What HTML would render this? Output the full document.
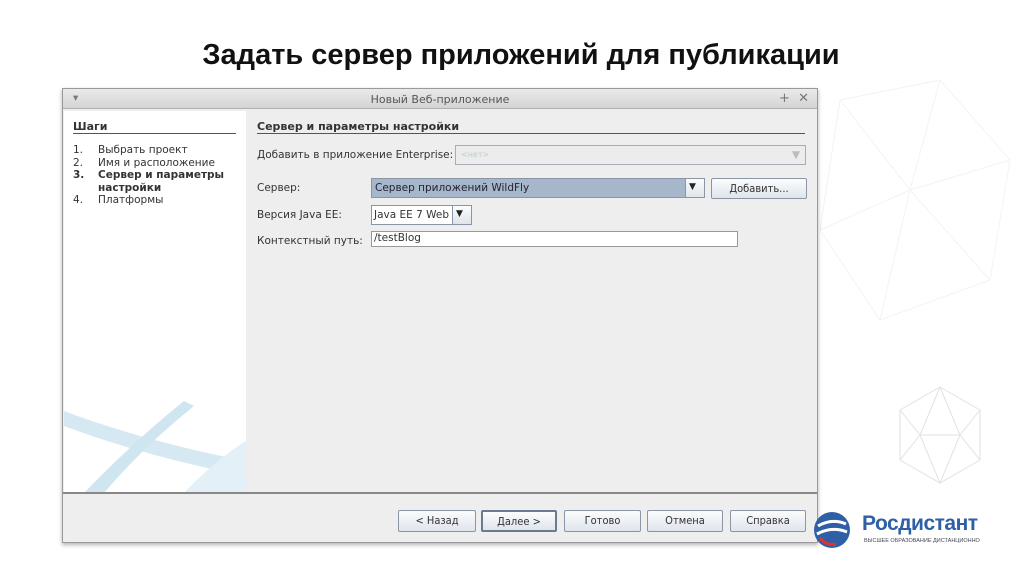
<!DOCTYPE html>
<html><head><meta charset="utf-8"><style>
*{margin:0;padding:0;box-sizing:border-box}
body{width:1024px;height:574px;background:#fff;position:relative;overflow:hidden;font-family:"Liberation Sans","DejaVu Sans",sans-serif}
.a{position:absolute}
h1{position:absolute;left:0;width:1042px;top:39px;text-align:center;font-size:29px;font-weight:bold;color:#111}
.dlg{left:62px;top:88px;width:756px;height:455px;background:#eee;border:1px solid #9a9a9a;box-shadow:0 2px 4px rgba(0,0,0,.3)}
.t{font-family:"DejaVu Sans",sans-serif;font-size:10.5px;color:#333}
.btn{position:absolute;top:510px;height:22px;border:1px solid #8a96a6;border-radius:2px;background:linear-gradient(#fbfcfd,#dfe5ec);font-family:"DejaVu Sans Condensed","DejaVu Sans",sans-serif;font-size:11px;color:#333;text-align:center;line-height:20px}
</style></head><body>
<h1>Задать сервер приложений для публикации</h1>
<svg class="a" style="left:820px;top:80px" width="200" height="250" viewBox="0 0 200 250" fill="none" stroke="#f3f3f3" stroke-width="1"><path d="M20 20L120 0L190 80L170 200L60 240L0 150Z M20 20L90 110L190 80 M90 110L170 200 M90 110L60 240 M90 110L0 150 M120 0L90 110"/></svg>
<svg class="a" style="left:895px;top:385px" width="90" height="100" viewBox="0 0 90 100" fill="none" stroke="#e2e2e2" stroke-width="1"><path d="M45 2L85 25L85 75L45 98L5 75L5 25Z M45 2L25 50L45 98L65 50Z M5 25L25 50L5 75 M85 25L65 50L85 75 M25 50H65"/></svg>
<div class="a dlg">
 <div class="a" style="left:0;top:0;width:754px;height:20px;background:linear-gradient(#eaeaea,#d4d4d4);border-bottom:1px solid #b0b0b0"></div>
 <div class="a t" style="left:10px;top:3px;color:#777">▾</div>
 <div class="a t" style="left:0;width:754px;top:4px;text-align:center;font-size:11px;color:#555">Новый Веб-приложение</div>
 <div class="a t" style="left:716px;top:2px;font-size:13px;color:#777">+&nbsp;&nbsp;✕</div>
 <div class="a" style="left:1px;top:22px;width:182px;height:381px;background:#fff;overflow:hidden">
  <svg class="a" style="left:0;top:290px" width="182" height="92" viewBox="0 0 182 92"><path d="M0 10Q80 40 182 60L182 75Q80 55 0 25Z" fill="#d6e9f3"/><path d="M20 92Q70 40 120 0L130 5Q80 45 40 92Z" fill="#cfe5f0"/><path d="M120 92Q150 60 182 40V92Z" fill="#e3f0f7"/></svg>
 </div>
 <div class="a t" style="left:10px;top:31px;font-weight:bold;font-size:11px">Шаги</div>
 <div class="a" style="left:10px;top:44px;width:163px;border-top:1px solid #555"></div>
 <div class="a t" style="left:10px;top:55px;line-height:12.5px">1.<br>2.<br><b>3.</b><br><br>4.</div>
 <div class="a t" style="left:35px;top:55px;line-height:12.5px">Выбрать проект<br>Имя и расположение<br><b>Сервер и параметры<br>настройки</b><br>Платформы</div>
 <div class="a t" style="left:194px;top:31px;font-weight:bold;font-size:11px">Сервер и параметры настройки</div>
 <div class="a" style="left:194px;top:44px;width:548px;border-top:1px solid #555"></div>
 <div class="a t" style="left:194px;top:60px">Добавить в приложение Enterprise:</div>
 <div class="a" style="left:392px;top:56px;width:351px;height:20px;border:1px solid #aab;background:#ececec"></div>
 <div class="a t" style="left:398px;top:61px;font-size:8px;color:#bcc">&lt;нет&gt;</div>
 <div class="a t" style="left:729px;top:60px;color:#bbb">▼</div>
 <div class="a t" style="left:194px;top:93px">Сервер:</div>
 <div class="a" style="left:308px;top:89px;width:334px;height:20px;border:1px solid #8a96a6;background:#a6b7cc"></div>
 <div class="a" style="left:622px;top:90px;width:19px;height:18px;background:linear-gradient(#fbfcfd,#dfe5ec);border-left:1px solid #8a96a6"></div>
 <div class="a t" style="left:626px;top:93px;font-size:9px;color:#222">▼</div>
 <div class="a t" style="left:312px;top:93px;color:#223">Сервер приложений WildFly</div>
 <div class="btn" style="left:648px;top:89px;width:96px;height:21px">Добавить...</div>
 <div class="a t" style="left:194px;top:120px">Версия Java EE:</div>
 <div class="a" style="left:308px;top:116px;width:101px;height:20px;border:1px solid #8a96a6;background:#fff"></div>
 <div class="a" style="left:389px;top:117px;width:19px;height:18px;background:linear-gradient(#fbfcfd,#dfe5ec);border-left:1px solid #8a96a6"></div>
 <div class="a t" style="left:393px;top:120px;font-size:9px;color:#222">▼</div>
 <div class="a t" style="left:311px;top:120px">Java EE 7 Web</div>
 <div class="a t" style="left:194px;top:146px">Контекстный путь:</div>
 <div class="a" style="left:308px;top:142px;width:367px;height:16px;border:1px solid #999;background:#fff"></div>
 <div class="a t" style="left:311px;top:143px">/testBlog</div>
 <div class="a" style="left:0;top:403px;width:754px;border-top:2px solid #888"></div>
</div>
<div class="btn" style="left:398px;width:78px">&lt; Назад</div>
<div class="btn" style="left:481px;width:76px;border:2px solid #6a7a90">Далее &gt;</div>
<div class="btn" style="left:564px;width:77px">Готово</div>
<div class="btn" style="left:647px;width:76px">Отмена</div>
<div class="btn" style="left:730px;width:76px">Справка</div>
<svg class="a" style="left:812px;top:508px" width="40" height="44" viewBox="0 0 40 44"><circle cx="20" cy="22" r="18" fill="#2f5fa6"/><path d="M6 18Q20 10 34 16M5 26Q20 18 35 24" stroke="#fff" stroke-width="3" fill="none"/><path d="M8 30Q14 38 24 36" stroke="#d33" stroke-width="3" fill="none"/></svg>
<div class="a" style="left:862px;top:512px;font-size:21px;font-weight:bold;color:#2f5fa6;letter-spacing:-0.5px">Росдистант</div>
<div class="a" style="left:864px;top:538px;font-size:5.5px;color:#445">ВЫСШЕЕ ОБРАЗОВАНИЕ ДИСТАНЦИОННО</div>
</body></html>
